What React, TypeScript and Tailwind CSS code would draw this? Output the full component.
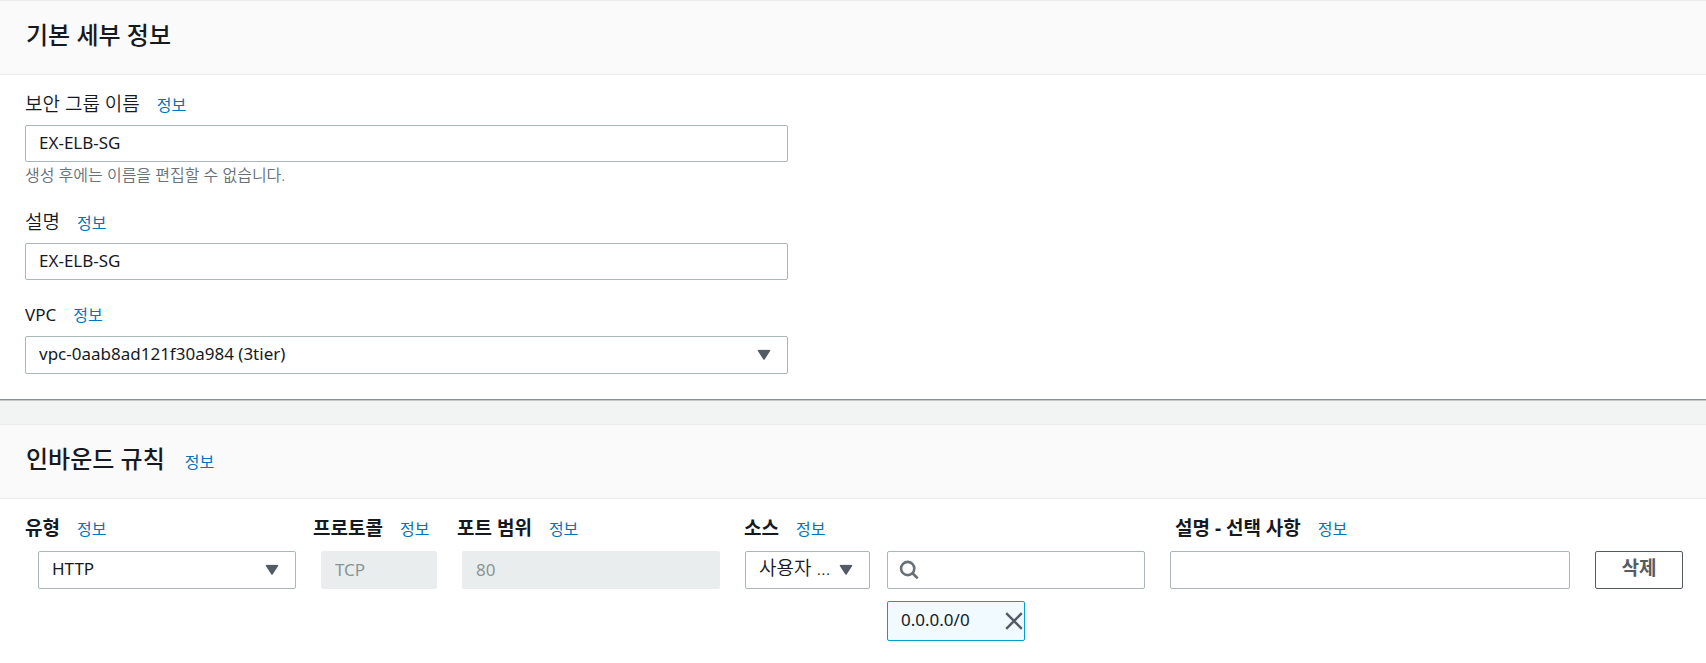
import React, { useId, useState } from 'react';

const controlBase =
  'block w-full rounded-[2px] border border-[#aab7b8] bg-white px-[13px] text-[#16191f] outline-none focus:border-[#00a1c9]';
const textInput = `${controlBase} h-[37px] pb-[3px] text-[17px]`;
const rowInput = `${controlBase} h-[38px] pb-[2px] text-[17px]`;
const disabledInput =
  'block h-[38px] w-full rounded-[2px] border border-[#eaeded] bg-[#eaeded] px-[13px] pb-[2px] text-[17px] text-[#879596]';

function InfoLink() {
  return (
    <a href="#info" className="text-[16px] leading-6 font-normal text-[#0073bb] hover:underline">
      정보
    </a>
  );
}

function Caret() {
  return (
    <svg
      viewBox="0 0 14 11"
      className="pointer-events-none absolute top-1/2 right-[17px] h-[11px] w-[14px] -translate-y-1/2"
      aria-hidden="true"
    >
      <path d="M1.5 1h11L7 9.5z" fill="#545b64" stroke="#545b64" strokeWidth="1.5" strokeLinejoin="round" />
    </svg>
  );
}

type SelectProps = { id: string; option: string; className?: string };

function Select({ id, option, className = 'pb-[2px] text-[17px]' }: SelectProps) {
  return (
    <div className="relative self-start">
      <select id={id} className={`${controlBase} h-[38px] appearance-none ${className}`}>
        <option>{option}</option>
      </select>
      <Caret />
    </div>
  );
}

type FieldProps = { id: string; label: string; labelClass?: string; children: React.ReactNode };

function Field({ id, label, labelClass = 'text-[19px] font-[350]', children }: FieldProps) {
  return (
    <div>
      <div className="mb-2 flex h-[25px] items-baseline gap-[17px]">
        <label htmlFor={id} className={`leading-6 ${labelClass}`}>
          {label}
        </label>
        <InfoLink />
      </div>
      {children}
    </div>
  );
}

function ColumnLabel({ id, children }: { id: string; children: React.ReactNode }) {
  return (
    <div className="flex h-[25px] items-baseline gap-[17px] whitespace-nowrap">
      <label htmlFor={id} className="text-[19px] leading-6 font-bold">
        {children}
      </label>
      <InfoLink />
    </div>
  );
}

function CardHeader({ title, info }: { title: string; info?: boolean }) {
  return (
    <header className="flex h-[75px] items-baseline gap-5 border-y border-[#eaeded] bg-[#fafafa] px-[26px] pt-4">
      <h2 className="text-[24px] leading-9 font-medium">{title}</h2>
      {info && <InfoLink />}
    </header>
  );
}

export default function App() {
  const uid = useId();
  const [name, setName] = useState('EX-ELB-SG');
  const [description, setDescription] = useState('EX-ELB-SG');
  const [sources, setSources] = useState(['0.0.0.0/0']);
  const id = (key: string) => `${uid}-${key}`;

  return (
    <main className="min-h-screen bg-[#f2f3f3] font-['Noto_Sans','Noto_Sans_CJK_KR',sans-serif] text-[#16191f]">
      <section className="border-b border-[#879196] bg-white shadow-[0_1px_0_0_#c3c8cb]">
        <CardHeader title="기본 세부 정보" />
        <div className="flex w-[46.2%] flex-col pt-[17px] pb-[25px] pl-[25px]">
          <Field id={id('name')} label="보안 그룹 이름">
            <input
              id={id('name')}
              value={name}
              onChange={(e) => setName(e.target.value)}
              className={textInput}
            />
            <p className="h-6 pt-[1px] text-[16px] leading-6 font-[350] text-[#687078]">
              생성 후에는 이름을 편집할 수 없습니다.
            </p>
          </Field>
          <div className="mt-6">
            <Field id={id('description')} label="설명">
              <input
                id={id('description')}
                value={description}
                onChange={(e) => setDescription(e.target.value)}
                className={textInput}
              />
            </Field>
          </div>
          <div className="mt-[23px]">
            <Field id={id('vpc')} label="VPC" labelClass="text-[17px]">
              <Select id={id('vpc')} option="vpc-0aab8ad121f30a984 (3tier)" />
            </Field>
          </div>
        </div>
      </section>

      <section className="mt-6 min-h-[239px] bg-white">
        <CardHeader title="인바운드 규칙" info />
        <div className="grid grid-cols-[288fr_144fr_287fr_431fr_506fr] px-[25px] pt-[17px]">
          <ColumnLabel id={id('type')}>유형</ColumnLabel>
          <ColumnLabel id={id('protocol')}>프로토콜</ColumnLabel>
          <ColumnLabel id={id('port')}>포트 범위</ColumnLabel>
          <ColumnLabel id={id('source')}>소스</ColumnLabel>
          <ColumnLabel id={id('note')}>설명 - 선택 사항</ColumnLabel>
        </div>
        <div className="mt-[10px] grid grid-cols-[258fr_116fr_258fr_400fr_400fr_88px] items-start gap-[25px] pr-[23px] pl-[38px]">
          <Select id={id('type')} option="HTTP" />
          <input id={id('protocol')} value="TCP" disabled className={disabledInput} />
          <input id={id('port')} value="80" disabled className={disabledInput} />
          <div className="grid grid-cols-[125fr_258fr] gap-x-[17px]">
            <Select id={id('source')} option="사용자 ..." className="pb-1 text-[19px] font-[350]" />
            <div>
              <div className="relative">
                <svg
                  viewBox="0 0 20 20"
                  className="pointer-events-none absolute top-1/2 left-3 h-5 w-5 -translate-y-1/2"
                  fill="none"
                  stroke="#687078"
                  strokeWidth="2.6"
                  aria-hidden="true"
                >
                  <circle cx="8.7" cy="8.5" r="6.6" />
                  <path d="M13.3 13l5.4 5.4" />
                </svg>
                <input type="search" aria-label="소스 검색" className={`${rowInput} pl-10`} />
              </div>
              {sources.map((source) => (
                <div
                  key={source}
                  className="mt-3 flex h-10 w-[138px] items-center justify-between rounded-[2px] border border-[#00a1c9] bg-[#f1faff] pr-[1px] pl-[13px]"
                >
                  <span className="pb-[2px] text-[17px] leading-6">{source}</span>
                  <button
                    type="button"
                    aria-label="제거"
                    onClick={() => setSources(sources.filter((s) => s !== source))}
                  >
                    <svg
                      viewBox="0 0 18 18"
                      className="h-[18px] w-[18px]"
                      stroke="#545b64"
                      strokeWidth="2.4"
                      aria-hidden="true"
                    >
                      <path d="M1.2 1.2l15.6 15.6M16.8 1.2L1.2 16.8" />
                    </svg>
                  </button>
                </div>
              ))}
            </div>
          </div>
          <input id={id('note')} aria-label="설명 - 선택 사항" className={rowInput} />
          <button
            type="button"
            className="flex h-[38px] items-center justify-center rounded-[2px] border border-[#545b64] bg-white pb-1 text-[19px] leading-6 font-bold text-[#545b64]"
          >
            삭제
          </button>
        </div>
      </section>
    </main>
  );
}
